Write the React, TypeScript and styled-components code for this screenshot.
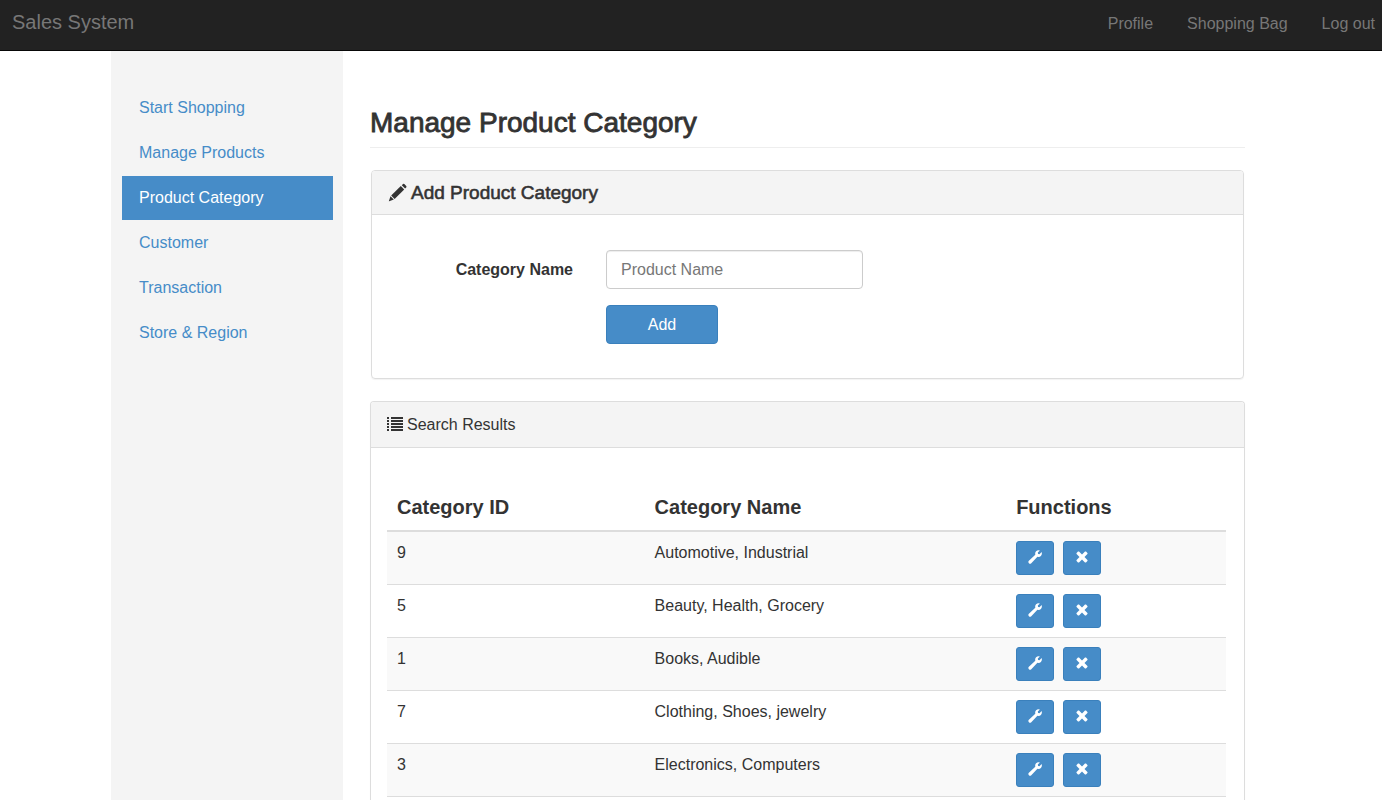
import React from "react";
import styled, { createGlobalStyle } from "styled-components";

const GlobalStyle = createGlobalStyle`
  *, *::before, *::after { box-sizing: border-box; }
  body {
    margin: 0;
    background: #fff;
    color: #333;
    font-family: "Helvetica Neue", Helvetica, "Liberation Sans", Arial, sans-serif;
    font-size: 16px;
    line-height: 24px;
  }
`;

const Page = styled.div`
  display: flex;
  flex-direction: column;
  min-height: 100vh;
`;

const Navbar = styled.header`
  display: flex;
  align-items: baseline;
  justify-content: space-between;
  padding: 10px 7px 14px 12px;
  background: #222;
  border-bottom: 1px solid #080808;
`;

const Brand = styled.a`
  color: #777;
  font-size: 20px;
  text-decoration: none;
`;

const NavLinks = styled.nav`
  display: flex;
  gap: 34px;
`;

const NavLink = styled.a`
  color: #777;
  text-decoration: none;
`;

const Container = styled.div`
  display: flex;
  flex: 1;
  width: 100%;
  max-width: 1160px;
  margin: 0 auto;
`;

const Sidebar = styled.nav`
  display: flex;
  flex-direction: column;
  gap: 1px;
  flex: 0 0 20%;
  padding: 35px 10px 24px 11px;
  background: #f4f4f4;
`;

const SideLink = styled.a<{ $active?: boolean }>`
  padding: 10px 17px;
  color: ${(p) => (p.$active ? "#fff" : "#468cc8")};
  background: ${(p) => (p.$active ? "#468cc8" : "transparent")};
  text-decoration: none;
`;

const Main = styled.main`
  display: flex;
  flex-direction: column;
  flex: 1;
  min-width: 0;
  padding: 56px 26px 0 27px;
`;

const PageTitle = styled.h1`
  margin: 0 0 22px;
  padding-bottom: 8px;
  border-bottom: 1px solid #eee;
  font-size: 28px;
  font-weight: 400;
  line-height: 32px;
  -webkit-text-stroke: 0.03em currentColor;
`;

const Panel = styled.section`
  border: 1px solid #ddd;
  border-radius: 4px;
  box-shadow: 0 1px 1px rgba(0, 0, 0, 0.05);
`;

const FormPanel = styled(Panel)`
  margin: 0 1px 22px;
`;

const ResultsPanel = styled(Panel)`
  flex: 1 0 auto;
  border-bottom: 0;
  border-radius: 4px 4px 0 0;
`;

const PanelHeading = styled.div<{ $compact?: boolean }>`
  display: flex;
  align-items: center;
  gap: 4px;
  padding: ${(p) => (p.$compact ? "10px 16px 9px" : "11px 16px 10px")};
  background: #f4f4f4;
  border-bottom: 1px solid #ddd;
  border-radius: 3px 3px 0 0;
`;

const PanelTitle = styled.h2<{ $large?: boolean }>`
  margin: 0;
  font-size: ${(p) => (p.$large ? "19px" : "16px")};
  font-weight: 400;
  line-height: 24px;
  -webkit-text-stroke: ${(p) => (p.$large ? "0.03em currentColor" : "0")};
`;

const Form = styled.form`
  display: grid;
  grid-template-columns: 185fr 257fr 331fr;
  gap: 16px 33px;
  align-items: center;
  padding: 35px 16px 34px;
`;

const Label = styled.label`
  font-weight: 700;
  text-align: right;
`;

const TextInput = styled.input`
  width: 100%;
  height: 39px;
  padding: 0 14px;
  border: 1px solid #ccc;
  border-radius: 4px;
  box-shadow: inset 0 1px 1px rgba(0, 0, 0, 0.075);
  background: #fff;
  color: #555;
  font: inherit;

  &::placeholder {
    color: #777;
    opacity: 1;
  }
`;

const Button = styled.button`
  display: inline-flex;
  align-items: center;
  justify-content: center;
  border: 1px solid #3a80bc;
  border-radius: 4px;
  background: #468cc8;
  color: #fff;
  font: inherit;
  cursor: pointer;
`;

const SubmitButton = styled(Button)`
  grid-column: 2;
  width: 112px;
  height: 39px;
`;

const IconButton = styled(Button)`
  width: 38px;
  height: 34px;
  padding: 0 0 2px;
  border-radius: 3px;
`;

const PanelBody = styled.div`
  padding: 36px 18px 0 16px;
`;

const Table = styled.table`
  width: 100%;
  border-collapse: separate;
  border-spacing: 0;
  table-layout: fixed;
`;

const HeadCell = styled.th<{ $width?: string }>`
  width: ${(p) => p.$width ?? "auto"};
  padding: 8px 9px 8px 10px;
  border-bottom: 2px solid #ddd;
  font-size: 20px;
  line-height: 30px;
  text-align: left;
`;

const Row = styled.tr`
  &:nth-child(odd) {
    background: #f9f9f9;
  }
`;

const Cell = styled.td`
  padding: 9px 9px 9px 10px;
  border-bottom: 1px solid #ddd;
  vertical-align: top;
`;

const Actions = styled.div`
  display: flex;
  gap: 9px;
`;

const PencilIcon = () => (
  <svg width="19" height="20" viewBox="0 0 19 20" fill="#333" aria-hidden="true">
    <path d="M13.8 2.2 15 1.1Q15.8.5 16.6 1.2L18.2 2.9Q18.9 3.7 18.2 4.4L17.1 5.5Z" />
    <path d="M12.8 3.1 16.2 6.5 6.6 15.9 3.2 12.5Z" />
    <path d="M2.5 13.3 5.8 16.6 1.2 18.2Q.7 18.4.9 17.9Z" />
  </svg>
);

const ListIcon = () => (
  <svg width="16" height="16" viewBox="0 0 16 16" fill="#333" aria-hidden="true">
    {[0, 3, 6, 9, 12].map((y) => (
      <path key={y} d={`M0 ${y}h2v2H0zM4 ${y}h12v2H4z`} />
    ))}
  </svg>
);

const WrenchIcon = () => (
  <svg width="14" height="14" viewBox="0 0 14 14" fill="#fff" aria-hidden="true">
    <path d="M11.9.4 9.8 2.5 10.1 3.9 11.5 4.2 13.6 2.1Q14.4 4.4 12.9 6 11.5 7.3 9.4 6.8L3.3 13.2Q2.1 14.3.9 13.2-.2 12 .9 10.8L7.3 4.7Q6.8 2.6 8.1 1.2 9.7-.3 11.9.4Z" />
  </svg>
);

const RemoveIcon = () => (
  <svg width="12" height="12" viewBox="0 0 12 12" fill="#fff" aria-hidden="true">
    <path d="M3 .6 6 3.5 9 .6Q9.5.2 10 .6L11.4 2Q11.8 2.5 11.4 3L8.5 6 11.4 9Q11.8 9.5 11.4 10L10 11.4Q9.5 11.8 9 11.4L6 8.5 3 11.4Q2.5 11.8 2 11.4L.6 10Q.2 9.5.6 9L3.5 6 .6 3Q.2 2.5.6 2L2 .6Q2.5.2 3 .6Z" />
  </svg>
);

const navItems = ["Profile", "Shopping Bag", "Log out"];

const menuItems = [
  "Start Shopping",
  "Manage Products",
  "Product Category",
  "Customer",
  "Transaction",
  "Store & Region",
];

const categories = [
  { id: 9, name: "Automotive, Industrial" },
  { id: 5, name: "Beauty, Health, Grocery" },
  { id: 1, name: "Books, Audible" },
  { id: 7, name: "Clothing, Shoes, jewelry" },
  { id: 3, name: "Electronics, Computers" },
];

export default function App() {
  return (
    <Page>
      <GlobalStyle />
      <Navbar>
        <Brand href="#">Sales System</Brand>
        <NavLinks>
          {navItems.map((item) => (
            <NavLink key={item} href="#">{item}</NavLink>
          ))}
        </NavLinks>
      </Navbar>
      <Container>
        <Sidebar>
          {menuItems.map((item) => (
            <SideLink key={item} href="#" $active={item === "Product Category"}>
              {item}
            </SideLink>
          ))}
        </Sidebar>
        <Main>
          <PageTitle>Manage Product Category</PageTitle>
          <FormPanel>
            <PanelHeading $compact>
              <PencilIcon />
              <PanelTitle $large>Add Product Category</PanelTitle>
            </PanelHeading>
            <Form onSubmit={(e) => e.preventDefault()}>
              <Label htmlFor="category-name">Category Name</Label>
              <TextInput id="category-name" type="text" placeholder="Product Name" />
              <SubmitButton type="submit">Add</SubmitButton>
            </Form>
          </FormPanel>
          <ResultsPanel>
            <PanelHeading>
              <ListIcon />
              <PanelTitle>Search Results</PanelTitle>
            </PanelHeading>
            <PanelBody>
              <Table>
                <thead>
                  <tr>
                    <HeadCell scope="col" $width="30.7%">Category ID</HeadCell>
                    <HeadCell scope="col" $width="43.1%">Category Name</HeadCell>
                    <HeadCell scope="col">Functions</HeadCell>
                  </tr>
                </thead>
                <tbody>
                  {categories.map((category) => (
                    <Row key={category.id}>
                      <Cell>{category.id}</Cell>
                      <Cell>{category.name}</Cell>
                      <Cell>
                        <Actions>
                          <IconButton type="button" aria-label={`Edit ${category.name}`}>
                            <WrenchIcon />
                          </IconButton>
                          <IconButton type="button" aria-label={`Remove ${category.name}`}>
                            <RemoveIcon />
                          </IconButton>
                        </Actions>
                      </Cell>
                    </Row>
                  ))}
                </tbody>
              </Table>
            </PanelBody>
          </ResultsPanel>
        </Main>
      </Container>
    </Page>
  );
}
